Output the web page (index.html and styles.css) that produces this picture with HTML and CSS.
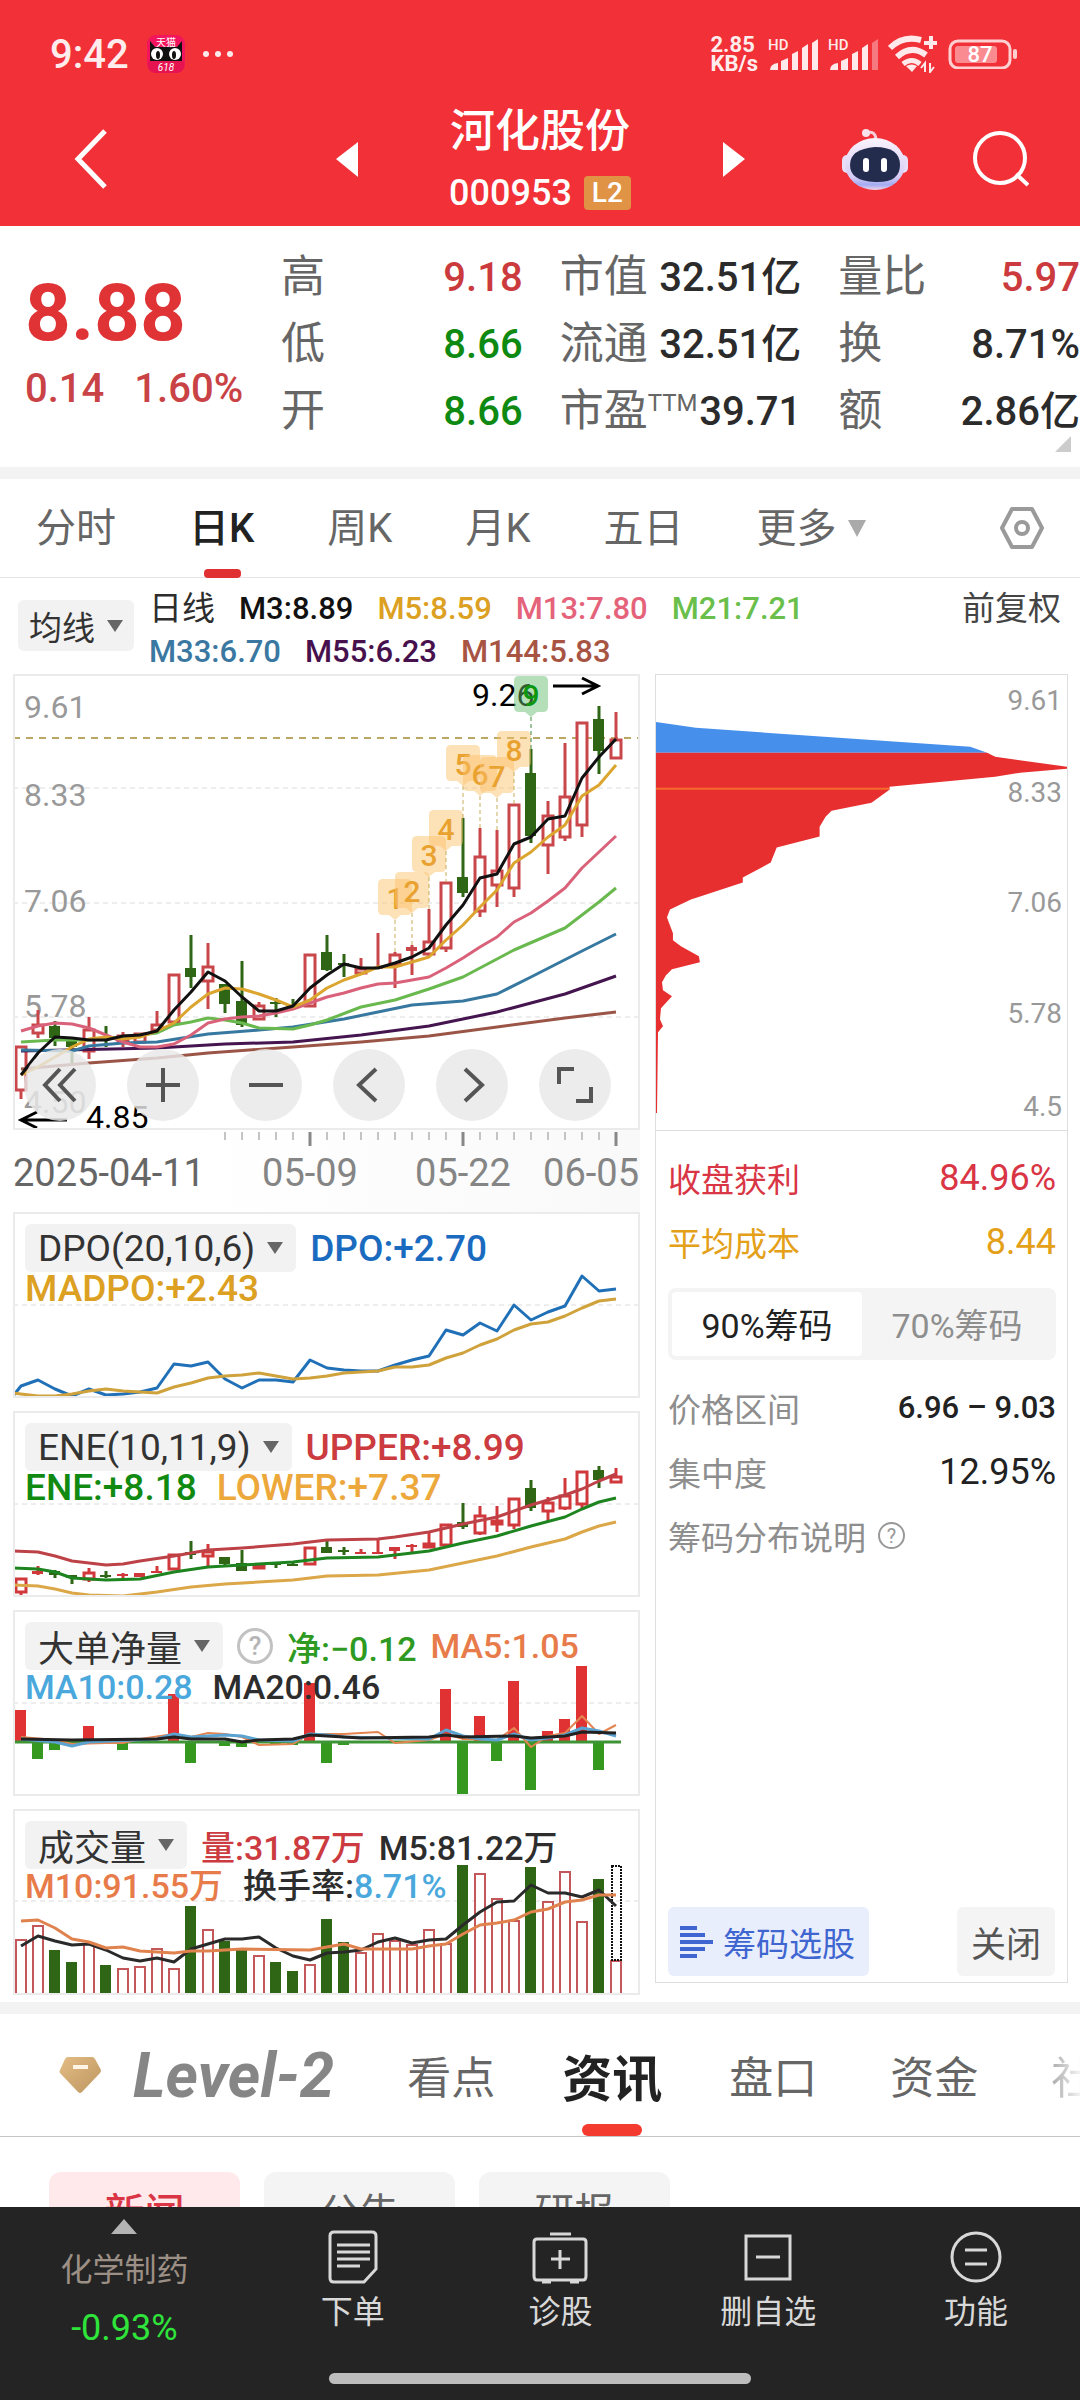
FILE: index.html
```html
<!DOCTYPE html>
<html lang="zh-CN">
<head>
<meta charset="utf-8">
<meta name="viewport" content="width=device-width, initial-scale=1">
<title>河化股份 000953</title>
<link rel="stylesheet" href="styles.css">
</head>
<body>
<div class="app">
  <header class="top">
    <div class="status">
      <span class="clock">9:42</span>
      <svg class="app-badge" width="38" height="38" viewBox="0 0 38 38" aria-hidden="true">
        <rect width="38" height="38" rx="9" fill="#f2145c"/>
        <path d="M3 6l5 6h22l5-6v20H3z" fill="#111"/>
        <text x="19" y="11" font-size="10" text-anchor="middle" fill="#fff">天猫</text>
        <ellipse cx="10" cy="19" rx="6" ry="6" fill="#fff"/><ellipse cx="28" cy="19" rx="6" ry="6" fill="#fff"/>
        <ellipse cx="11" cy="20" rx="2" ry="4" fill="#111"/><ellipse cx="27" cy="20" rx="2" ry="4" fill="#111"/>
        <path d="M1 26h36v4q0 8-9 8H10q-9 0-9-8z" fill="#e5134f"/>
        <text x="19" y="36" font-size="10" font-style="italic" text-anchor="middle" fill="#fff">618</text>
      </svg>
      <svg width="34" height="8" viewBox="0 0 34 8" aria-hidden="true" fill="#ffe9ea"><circle cx="5" cy="4" r="3"/><circle cx="17" cy="4" r="3"/><circle cx="29" cy="4" r="3"/></svg>
      <span class="status-right">
        <span class="rate">2.85<br>KB/s</span>
        <svg width="50" height="36" viewBox="0 0 50 36" aria-hidden="true" fill="#ffe9ea"><text x="0" y="14" font-size="15" font-weight="500">HD</text><path d="M2 34q0-6 8-7v7zM13 34V25l7-3v12zM24 34V18l6-3v19zM34 34V12l6-4v26zM44 34V7l6-4v31z"/></svg>
        <svg width="50" height="36" viewBox="0 0 50 36" aria-hidden="true" fill="#ffe9ea"><text x="0" y="14" font-size="15" font-weight="500">HD</text><path d="M2 34q0-6 8-7v7zM13 34V25l7-3v12zM24 34V18l6-3v19zM34 34V12l6-4v26z"/><path d="M44 34V7l6-4v31z" opacity=".4"/></svg>
        <svg width="50" height="38" viewBox="0 0 50 38" aria-hidden="true" fill="none" stroke="#ffe9ea" stroke-width="6"><path d="M2 13Q15 0 33 5M9 22q14-13 29-2" /><path d="M15 29q9-7 17 0" stroke-width="5"/><path d="M18 31q6-3 11 0l-5 6z" fill="#ffe9ea" stroke="none"/><path d="M43 1v13M36 8h13" stroke-width="4"/><path d="M37 37V28l-4 5M42 28v9l4-5" stroke-width="2"/></svg>
        <svg width="70" height="30" viewBox="0 0 70 30" aria-hidden="true"><rect x="2" y="2" width="60" height="27" rx="8" fill="none" stroke="#ffd0d2" stroke-width="3"/><rect x="7" y="7" width="42" height="17" rx="3" fill="#fa8b90"/><rect x="65" y="10" width="4" height="10" rx="2" fill="#ffd0d2"/><text x="32" y="23" font-size="22" font-weight="500" text-anchor="middle" fill="#fff">87</text></svg>
      </span>
    </div>
    <div class="titlebar">
      <button class="icon-btn back" aria-label="返回"><svg width="34" height="60" viewBox="0 0 34 60" fill="none" stroke="#fff" stroke-width="5"><path d="M31 2L4 30l27 28"/></svg></button>
      <div class="switcher">
        <button class="icon-btn" aria-label="上一只"><svg width="22" height="35" viewBox="0 0 22 35" fill="#fff"><path d="M22 0v35L0 17z"/></svg></button>
        <div class="stock">
          <h1 class="stock-name">河化股份</h1>
          <div class="stock-code">000953<span class="l2">L2</span></div>
        </div>
        <button class="icon-btn" aria-label="下一只"><svg width="22" height="35" viewBox="0 0 22 35" fill="#fff"><path d="M0 0v35l22-18z"/></svg></button>
      </div>
      <div class="tools">
        <button class="icon-btn" aria-label="助手">
          <svg width="66" height="64" viewBox="0 0 66 64"><defs><linearGradient id="bot" x1="0" y1="0" x2="0" y2="1"><stop offset="0" stop-color="#faf3fc"/><stop offset=".75" stop-color="#d6ccf5"/><stop offset=".9" stop-color="#a3abf2"/><stop offset="1" stop-color="#f2d3e6"/></linearGradient></defs><path d="M24 6q9-3 10 6" fill="none" stroke="#f6cfdb" stroke-width="3"/><circle cx="24" cy="6" r="4" fill="#f9e3ea"/><rect x="0" y="28" width="10" height="18" rx="5" fill="#e8def8"/><rect x="56" y="28" width="10" height="18" rx="5" fill="#e8def8"/><ellipse cx="33" cy="37" rx="30" ry="26" fill="url(#bot)"/><path d="M33 20q25 0 25 18t-25 17T8 38t25-18z" fill="#242c4e"/><rect x="21" y="31" width="6" height="14" rx="3" fill="#fff"/><rect x="39" y="31" width="6" height="14" rx="3" fill="#fff"/></svg>
        </button>
        <button class="icon-btn" aria-label="搜索"><svg width="56" height="56" viewBox="0 0 56 56" fill="none" stroke="#fff" stroke-width="4"><circle cx="27" cy="27" r="25"/><path d="M43 43l12 11"/></svg></button>
      </div>
    </div>
  </header>

  <main class="content">
    <section class="quote">
      <div class="price-col">
        <div class="price">8.88</div>
        <div class="change"><span>0.14</span><span>1.60%</span></div>
      </div>
      <dl class="facts">
        <div class="fact"><dt>高</dt><dd class="up">9.18</dd></div>
        <div class="fact"><dt>低</dt><dd class="down">8.66</dd></div>
        <div class="fact"><dt>开</dt><dd class="down">8.66</dd></div>
      </dl>
      <dl class="facts">
        <div class="fact"><dt>市值</dt><dd>32.51亿</dd></div>
        <div class="fact"><dt>流通</dt><dd>32.51亿</dd></div>
        <div class="fact"><dt>市盈<sup class="ttm">TTM</sup></dt><dd>39.71</dd></div>
      </dl>
      <dl class="facts">
        <div class="fact"><dt>量比</dt><dd class="up">5.97</dd></div>
        <div class="fact"><dt>换</dt><dd>8.71%</dd></div>
        <div class="fact"><dt>额</dt><dd>2.86亿</dd></div>
      </dl>
      <svg class="corner" width="16" height="16" viewBox="0 0 16 16" fill="#ccc" aria-hidden="true"><path d="M16 0v16H0z"/></svg>
    </section>

    <nav class="periods">
      <button class="period">分时</button>
      <button class="period on">日K</button>
      <button class="period">周K</button>
      <button class="period">月K</button>
      <button class="period">五日</button>
      <button class="period more">更多<svg width="18" height="17" viewBox="0 0 18 17" fill="#aaa"><path d="M0 0h18L9 17z"/></svg></button>
      <button class="icon-btn gear" aria-label="设置"><svg width="44" height="42" viewBox="0 0 44 42" fill="none" stroke="#9a9a9a" stroke-width="4"><path d="M12 2h20l10 19-10 19H12L2 21z" stroke-linejoin="round"/><circle cx="22" cy="21" r="6"/></svg></button>
    </nav>

    <div class="ma-bar">
      <button class="picker small">均线<svg width="16" height="12" viewBox="0 0 16 12" fill="#666"><path d="M0 0h16L8 12z"/></svg></button>
      <div class="ma-legend">
        <div class="ma-line"><span class="c-dark day">日线</span><span class="c-black">M3:8.89</span><span class="c-gold">M5:8.59</span><span class="c-pink">M13:7.80</span><span class="c-lime">M21:7.21</span></div>
        <div class="ma-line"><span class="c-steel">M33:6.70</span><span class="c-purple">M55:6.23</span><span class="c-brown">M144:5.83</span></div>
      </div>
      <button class="adjust">前复权</button>
    </div>

    <div class="board">
      <div class="charts">
        <div class="plot">
          <svg id="kline" class="draw" viewBox="0 0 627 456" role="img" aria-label="日K线"></svg>
          <div class="pan">
            <button class="pan-btn" aria-label="最左"><svg width="36" height="36" viewBox="0 0 36 36"><path d="M18 2L3 18l15 16M33 2L18 18l15 16"/></svg></button>
            <button class="pan-btn" aria-label="放大"><svg width="36" height="36" viewBox="0 0 36 36"><path d="M1 18h34M18 1v34"/></svg></button>
            <button class="pan-btn" aria-label="缩小"><svg width="36" height="36" viewBox="0 0 36 36"><path d="M1 18h34"/></svg></button>
            <button class="pan-btn" aria-label="左移"><svg width="36" height="36" viewBox="0 0 36 36"><path d="M25 2L8 18l17 16"/></svg></button>
            <button class="pan-btn" aria-label="右移"><svg width="36" height="36" viewBox="0 0 36 36"><path d="M11 2l17 16-17 16"/></svg></button>
            <button class="pan-btn" aria-label="全屏"><svg width="36" height="36" viewBox="0 0 36 36"><path d="M2 17V2h15M34 20v14H19"/></svg></button>
          </div>
        </div>
        <svg id="axis" class="axis" viewBox="0 0 627 82" role="img" aria-label="日期"></svg>

        <div class="plot">
          <svg id="dpo" class="draw" viewBox="0 0 627 186" role="img" aria-label="DPO"></svg>
          <div class="legend">
            <div class="legend-top"><button class="picker">DPO(20,10,6)<svg width="16" height="12" viewBox="0 0 16 12" fill="#666"><path d="M0 0h16L8 12z"/></svg></button><span class="c-blue">DPO:+2.70</span></div>
            <div class="legend-low"><span class="c-gold">MADPO:+2.43</span></div>
          </div>
        </div>
        <div class="plot">
          <svg id="ene" class="draw" viewBox="0 0 627 186" role="img" aria-label="ENE"></svg>
          <div class="legend">
            <div class="legend-top"><button class="picker">ENE(10,11,9)<svg width="16" height="12" viewBox="0 0 16 12" fill="#666"><path d="M0 0h16L8 12z"/></svg></button><span class="c-red">UPPER:+8.99</span></div>
            <div class="legend-low"><span class="c-green">ENE:+8.18</span><span class="c-amber">LOWER:+7.37</span></div>
          </div>
        </div>
        <div class="plot">
          <svg id="net" class="draw" viewBox="0 0 627 186" role="img" aria-label="大单净量"></svg>
          <div class="legend tight">
            <div class="legend-top"><button class="picker">大单净量<svg width="16" height="12" viewBox="0 0 16 12" fill="#666"><path d="M0 0h16L8 12z"/></svg></button><button class="help" aria-label="说明">?</button><span class="c-leaf">净:−0.12</span><span class="c-orange">MA5:1.05</span></div>
            <div class="legend-low"><span class="c-sky">MA10:0.28</span><span class="c-dark">MA20:0.46</span></div>
          </div>
        </div>
        <div class="plot">
          <svg id="vol" class="draw" viewBox="0 0 627 186" role="img" aria-label="成交量"></svg>
          <div class="legend tight">
            <div class="legend-top"><button class="picker">成交量<svg width="16" height="12" viewBox="0 0 16 12" fill="#666"><path d="M0 0h16L8 12z"/></svg></button><span class="c-red">量:31.87万</span><span class="c-dark">M5:81.22万</span></div>
            <div class="legend-low"><span class="c-orange">M10:91.55万</span><span class="c-dark">换手率:<span class="c-sky">8.71%</span></span></div>
          </div>
        </div>
      </div>

      <aside class="chips">
        <svg class="chips-draw" viewBox="0 0 412 456" role="img" aria-label="筹码分布">
          <path d="M0 47L40 53 315 72 332 78H0z" fill="#4690ec"/>
          <path d="M0 78H332L340 82 412 92V94L365 98 340 102 234 112V115L216 128 176 136 170 142 164 152V162L121 173 115 188 87 203V208L35 225 14 235 11 243 17 259V266L25 272 43 282 44 288 16 295 10 301 6 308 7 316 16 322 5 334 4 345 7 352 2 358 1 439H0z" fill="#e82f30"/>
          <path d="M0 114H234" stroke="#f56a2d" stroke-width="2"/>
          <g class="tick" text-anchor="end"><text x="407" y="35">9.61</text><text x="407" y="127">8.33</text><text x="407" y="238">7.06</text><text x="407" y="349">5.78</text><text x="407" y="442">4.5</text></g>
        </svg>
        <div class="chips-body">
          <div class="stat c-crimson"><span>收盘获利</span><b>84.96%</b></div>
          <div class="stat c-honey"><span>平均成本</span><b>8.44</b></div>
          <div class="toggle"><button class="seg on">90%筹码</button><button class="seg">70%筹码</button></div>
          <div class="stat muted"><span>价格区间</span><b class="range">6.96 – 9.03</b></div>
          <div class="stat muted"><span>集中度</span><b>12.95%</b></div>
          <div class="stat muted note"><span>筹码分布说明</span><button class="help mini" aria-label="说明">?</button></div>
        </div>
        <div class="chips-foot">
          <button class="pick-stock"><svg width="33" height="32" viewBox="0 0 33 32" fill="#3f66d0"><path d="M0 0h17v4H0zM0 7h25v4H0zM0 14h33v4H0zM0 21h25v4H0zM0 28h17v4H0z"/></svg>筹码选股</button>
          <button class="close">关闭</button>
        </div>
      </aside>
    </div>

    <nav class="sections">
      <button class="section level">
        <svg width="42" height="36" viewBox="0 0 42 36"><defs><linearGradient id="gem" x1="0" y1="0" x2="1" y2="1"><stop offset="0" stop-color="#e3bd84"/><stop offset="1" stop-color="#bd9560"/></linearGradient></defs><path d="M9 0h24q2 0 3 2l6 11q0 2-1 3L23 35q-2 2-4 0L1 16q-1-1 0-3L6 2q1-2 3-2z" fill="url(#gem)"/><path d="M14 10h15" stroke="#fff5e4" stroke-width="4"/></svg>
        <span>Level-2</span>
      </button>
      <button class="section">看点</button>
      <button class="section on">资讯</button>
      <button class="section">盘口</button>
      <button class="section">资金</button>
      <button class="section fade">社区</button>
    </nav>
    <div class="feeds">
      <button class="feed on">新闻</button><button class="feed">公告</button><button class="feed">研报</button>
    </div>
  </main>

  <footer class="dock">
    <div class="dock-row">
      <button class="dock-index"><svg width="26" height="15" viewBox="0 0 26 15" fill="#b4b4b4"><path d="M13 0l13 15H0z"/></svg><span class="sector">化学制药</span><span class="sector-change">-0.93%</span></button>
      <button class="dock-item"><svg width="56" height="54" viewBox="0 0 56 54"><path d="M9 2h38q4 0 4 4v33L39 52H9q-4 0-4-4V6q0-4 4-4zM12 15h33M12 22h33M12 29h33M12 36h23"/></svg>下单</button>
      <button class="dock-item"><svg width="56" height="54" viewBox="0 0 56 54"><path d="M18 4h21M5 9h46q3 0 3 3v34q0 4-3 4H5q-3 0-3-4V12q0-3 3-3zM28 20v19M19 29h19M10 52h9M38 52h9"/></svg>诊股</button>
      <button class="dock-item"><svg width="56" height="54" viewBox="0 0 56 54"><path d="M6 6h44v43H6zM16 27h24"/></svg>删自选</button>
      <button class="dock-item"><svg width="56" height="54" viewBox="0 0 56 54"><circle cx="28" cy="27" r="24"/><path d="M17 20h22M17 34h22"/></svg>功能</button>
    </div>
    <div class="home-bar"></div>
  </footer>
</div>
<script src="charts.js"></script>
</body>
</html>
```
FILE: styles.css
```css
* { box-sizing: border-box; }
body { margin: 0; background: #fff; color: #333; font-family: Roboto, "Noto Sans CJK SC", sans-serif; }
button { font: inherit; color: inherit; background: none; border: 0; padding: 0; margin: 0; white-space: nowrap; cursor: pointer; }
dl, dd, h1 { margin: 0; }
svg { display: block; flex: none; }
svg text { font-family: Roboto, "Noto Sans CJK SC", sans-serif; }

.app { display: flex; flex-direction: column; height: 100vh; }
.icon-btn { display: block; }

/* header */
.top { background: #f13037; color: #fff; flex: none; padding-bottom: 12px; }
.status { display: flex; align-items: center; height: 104px; padding: 4px 62px 0 50px; color: #ffeced; }
.clock { font-size: 40px; font-weight: 500; margin-right: 18px; }
.app-badge { margin-right: 16px; }
.status-right { display: flex; align-items: center; gap: 10px; margin-left: auto; }
.rate { font-size: 22px; font-weight: 700; line-height: 19px; }
.titlebar { display: grid; grid-template-columns: 1fr 409px 1fr; align-items: center; height: 110px; }
.back { justify-self: start; margin-left: 74px; }
.switcher { display: flex; align-items: center; justify-content: space-between; }
.stock { height: 110px; }
.stock-name { font-size: 45px; line-height: 56px; font-weight: 500; text-align: center; }
.stock-code { display: flex; align-items: center; gap: 12px; margin-top: 16px; font-size: 36px; line-height: 34px; font-weight: 500; }
.l2 { background: #e09345; border-radius: 4px; padding: 0 8px; font-size: 28px; }
.tools { display: flex; align-items: center; justify-content: flex-end; gap: 65px; padding-right: 51px; }

.content { flex: 1; min-height: 0; overflow: hidden auto; scrollbar-width: none; }

/* quote */
.quote { position: relative; display: grid; grid-template-columns: 219px repeat(3, 1fr); column-gap: 37px; padding: 18px 0 22px 25px; border-bottom: 12px solid #f3f3f3; }
.price-col { padding-top: 23px; color: #df3335; }
.price { font-size: 80px; font-weight: 700; line-height: 92px; }
.change { display: flex; gap: 30px; font-size: 40px; line-height: 60px; color: #c94245; font-weight: 500; }
.fact { display: flex; justify-content: space-between; line-height: 67px; white-space: nowrap; }
.fact dt { font-size: 44px; color: #666; display: flex; }
.fact dd { font-size: 40px; font-weight: 500; color: #2b2b2b; }
.ttm { font-size: 24px; line-height: 50px; }
.fact .up { color: #cb3a3d; }
.fact .down { color: #0e8a12; }
.corner { position: absolute; right: 9px; bottom: 15px; }

/* periods */
.periods { display: flex; align-items: center; gap: 73px; height: 99px; padding: 0 36px; border-bottom: 1px solid #e4e4e4; font-size: 40px; color: #666; }
.period { position: relative; line-height: 99px; }
.period.on { color: #222; font-weight: 500; }
.period.on::after { content: ""; position: absolute; left: calc(50% - 18px); bottom: 0; width: 37px; height: 9px; border-radius: 4px; background: #e03032; }
.more { display: flex; align-items: center; gap: 11px; }
.gear { margin-left: auto; }

/* moving average bar */
.ma-bar { display: flex; align-items: flex-start; padding: 9px 19px 0 18px; height: 96px; }
.picker { display: flex; align-items: center; gap: 12px; height: 48px; padding: 0 13px; border-radius: 6px; background: #f2f2f2; color: #333; font-size: 37px; }
.picker.small { margin-top: 13px; height: 51px; padding: 0 11px; font-size: 33px; }
.ma-legend { margin-left: 15px; font-size: 31px; line-height: 43px; font-weight: 500; }
.ma-line { display: flex; gap: 24px; }
.day { font-size: 33px; font-weight: 400; }
.adjust { margin-left: auto; font-size: 33px; line-height: 43px; color: #444; }

.c-dark { color: #2d2d2d; }
.c-black { color: #111; }
.c-gold { color: #dca022; }
.c-pink { color: #e5637a; }
.c-lime { color: #6abf4b; }
.c-steel { color: #3a78a2; }
.c-purple { color: #47114d; }
.c-brown { color: #a85443; }
.c-blue { color: #1a6bc0; }
.c-red { color: #cb3b40; }
.c-green { color: #118a11; }
.c-amber { color: #eda83c; }
.c-leaf { color: #2f9a22; }
.c-orange { color: #e87b4a; }
.c-sky { color: #4aa8dc; }
.c-crimson { color: #d93545; }
.c-honey { color: #e3a018; }

/* charts */
.board { display: grid; grid-template-columns: 627fr 413fr; column-gap: 15px; padding: 0 12px 7px 13px; border-bottom: 12px solid #f3f3f3; }
.plot { position: relative; outline: 2px solid #ebebeb; outline-offset: -2px; }
.plot + .plot { margin-top: 13px; }
.draw, .axis, .chips-draw { width: 100%; height: auto; }
.axis { background: linear-gradient(90deg, #fff 30%, #f9f9f9); }
.pan { position: absolute; left: 11px; right: 29px; bottom: 9px; display: flex; justify-content: space-between; }
.pan-btn { display: flex; align-items: center; justify-content: center; width: 72px; height: 72px; border-radius: 50%; background: rgba(232, 232, 232, .82); }
.pan-btn svg { fill: none; stroke: #555; stroke-width: 4; }
.legend { position: absolute; inset: 11px 12px auto 12px; font-size: 37px; font-weight: 500; white-space: nowrap; }
.legend .picker { font-weight: 400; }
.tight { font-size: 34px; }
.tight .picker { font-size: 36px; }
.legend-top { display: flex; align-items: center; gap: 14px; height: 50px; }
.legend-low { display: flex; gap: 20px; line-height: 32px; }
.help { width: 36px; height: 36px; border: 3px solid #c2c2c2; border-radius: 50%; color: #b5b5b5; font-size: 26px; line-height: 30px; }
.tick { font-size: 28px; fill: #999; }
.scale { font-size: 32px; fill: #999; }

/* chip distribution */
.chips { display: flex; flex-direction: column; border: 1px solid #dedede; margin-bottom: 12px; }
.chips-draw { border-bottom: 1px solid #dedede; }
.chips-body { padding: 15px 11px 0 12px; }
.stat { display: flex; align-items: center; justify-content: space-between; height: 64px; font-size: 33px; white-space: nowrap; }
.stat b { font-size: 36px; font-weight: 400; }
.stat .range { font-size: 31px; font-weight: 500; }
.muted { color: #8e8e8e; }
.muted b { color: #222; }
.note { justify-content: flex-start; gap: 12px; }
.mini { width: 27px; height: 27px; border-width: 2px; color: #999; border-color: #999; font-size: 20px; line-height: 22px; }
.toggle { display: flex; height: 72px; margin: 14px 0 16px; padding: 4px; background: #f4f4f4; border-radius: 8px; }
.seg { flex: 1; font-size: 34px; color: #8e8e8e; border-radius: 4px; }
.seg.on { background: #fff; color: #222; }
.chips-foot { display: flex; justify-content: space-between; margin-top: auto; padding: 0 12px 6px; }
.pick-stock { display: flex; align-items: center; gap: 10px; height: 69px; padding: 0 14px 0 12px; border-radius: 6px; background: #e9eefd; color: #3f66d0; font-size: 33px; }
.close { height: 69px; padding: 0 14px; border-radius: 6px; background: #f4f4f4; color: #555; font-size: 35px; }

/* sections */
.sections { display: flex; align-items: center; gap: 73px; height: 123px; padding-left: 59px; overflow: hidden; border-bottom: 1px solid #c6c6c6; font-size: 44px; color: #666; }
.section { position: relative; height: 122px; flex: none; }
.level { display: flex; align-items: center; gap: 32px; font-size: 62px; font-weight: 700; font-style: italic; color: #868686; }
.section.on { margin: 0 -6px; font-size: 50px; font-weight: 700; color: #222; }
.section.on::after { content: ""; position: absolute; left: calc(50% - 30px); bottom: 0; width: 60px; height: 12px; border-radius: 6px; background: #f43b30; }
.fade { background: linear-gradient(90deg, #aaa, #fff 34px); -webkit-background-clip: text; background-clip: text; color: transparent; }
.feeds { display: flex; gap: 24px; padding: 35px 49px; }
.feed { width: 191px; height: 76px; border-radius: 12px; background: #f4f4f4; font-size: 40px; color: #666; }
.feed.on { background: #ffe9eb; color: #d93545; font-weight: 500; }

/* bottom dock */
.dock { flex: none; background: #242424; color: #d8d8d8; padding: 12px 0 16px; }
.dock-row { display: grid; grid-template-columns: 249fr repeat(4, 208fr); height: 154px; }
.dock-index { display: flex; flex-direction: column; align-items: center; }
.sector { margin-top: 16px; font-size: 32px; line-height: 40px; color: #9c8f85; }
.sector-change { margin-top: 18px; font-size: 36px; line-height: 40px; color: #2fe43a; }
.dock-item { display: flex; flex-direction: column; align-items: center; gap: 8px; padding-top: 11px; font-size: 32px; line-height: 40px; }
.dock-item svg { fill: none; stroke: #d8d8d8; stroke-width: 3; }
.home-bar { width: 39%; height: 11px; margin: 0 auto; border-radius: 6px; background: #bdbdbd; }
```
FILE: charts.js
```js
const STEP = 17, FIRST = 8, BODY = 11;
const RED = '#c9474b', GREEN = '#2f6615';
const at = i => Math.round(FIRST + STEP * i);
const put = (id, html) => { document.getElementById(id).innerHTML = html; };

// direction, wick top, body top, body bottom, wick bottom
const candles = [
  ['r', 372, 372, 417, 425], ['r', 336, 350, 360, 364], ['g', 347, 352, 364, 372], ['g', 364, 364, 373, 390],
  ['r', 343, 355, 378, 385], ['g', 352, 363, 365, 373], ['r', 358, 361, 368, 373], ['r', 359, 359, 369, 369],
  ['r', 337, 350, 357, 357], ['r', 300, 300, 349, 349], ['g', 261, 294, 303, 314], ['r', 269, 292, 308, 335],
  ['g', 310, 310, 330, 339], ['g', 287, 327, 351, 353], ['r', 328, 331, 346, 346], ['g', 324, 328, 330, 343],
  ['g', 325, 331, 333, 333], ['r', 280, 280, 333, 333], ['g', 261, 278, 296, 297], ['g', 280, 289, 291, 303],
  ['r', 284, 294, 300, 300], ['r', 259, 293, 295, 295], ['r', 278, 280, 292, 314], ['r', 271, 273, 277, 301],
  ['r', 235, 267, 281, 283], ['r', 208, 208, 275, 278], ['g', 144, 203, 219, 223], ['r', 154, 182, 238, 243],
  ['r', 156, 196, 212, 233], ['r', 130, 130, 215, 223], ['g', 75, 99, 162, 169], ['r', 127, 141, 172, 200],
  ['r', 69, 122, 164, 167], ['r', 48, 48, 152, 163], ['g', 32, 45, 77, 100], ['r', 38, 65, 85, 85]
];

function drawCandles(map, red) {
  return candles.map(([dir, wt, bt, bb, wb], i) => {
    const x = at(i), c = dir === 'r' ? red : GREEN;
    const [a, b, d, e] = [wt, bt, bb, wb].map(map);
    const h = Math.max(d - b, 2);
    const wicks = `<path d="M${x} ${a}V${b}M${x} ${d}V${e}" stroke="${c}" stroke-width="3"/>`;
    if (dir === 'g' || h < 5) return wicks + `<rect x="${x - 6}" y="${b}" width="${BODY}" height="${h}" fill="${c}"/>`;
    return wicks + `<rect x="${x - 5}" y="${b + 1}" width="10" height="${h - 2}" fill="#fff" stroke="${c}" stroke-width="3"/>`;
  }).join('');
}

// a line is a list of "index:y" pairs
function line(points, color, width = 3) {
  const p = points.trim().split(/\s+/).map(s => { const [i, y] = s.split(':'); return `${at(+i)},${y}`; }).join(' ');
  return `<polyline points="${p}" fill="none" stroke="${color}" stroke-width="${width}" stroke-linejoin="round"/>`;
}
const seq = a => a.map((y, i) => `${i}:${y}`).join(' ');
const grid = y => `<path d="M0 ${y}H627" stroke="#dcdcdc" stroke-width="1" stroke-dasharray="5 4"/>`;

const tags = [[22, 1, 205], [23, 2, 198], [24, 3, 162], [25, 4, 136], [26, 5, 71], [27, 6, 81], [28, 7, 83], [29, 8, 57], [30, 9, 2]];
const tagSvg = tags.map(([i, n, y]) => {
  const x = at(i), g = n === 9;
  return `<path d="M${x} ${y + 41}V${candles[i][1]}" stroke="${g ? '#3c8a3c' : '#c8ad5a'}" stroke-dasharray="4 3"/>` +
    `<path d="M${x - 12} ${y}h24q5 0 5 5v26q0 5-5 5h-6l-6 5-6-5h-6q-5 0-5-5v-26q0-5 5-5z" fill="${g ? '#62bd6c' : '#fbc069'}" opacity=".48"/>` +
    `<text x="${x}" y="${y + 30}" font-size="30" font-weight="500" text-anchor="middle" fill="${g ? '#0d970f' : '#e9a230'}">${n}</text>`;
}).join('');

put('kline',
  '<path d="M0 64H627" stroke="#b9a763" stroke-width="2" stroke-dasharray="7 6"/>' + grid(114) + grid(229) + grid(343) +
  '<g class="scale"><text x="11" y="44">9.61</text><text x="11" y="132">8.33</text><text x="11" y="238">7.06</text><text x="11" y="343">5.78</text><text x="11" y="439">4.50</text></g>' +
  drawCandles(y => y, RED) +
  line('0:395 4:389 8:384 11:379 16:373 20:368 24:362 28:353 32:344 35:338', '#9a5547') +
  line('0:377 8:374 12:370 16:368 20:361 24:352 26:345 28:338 30:329 32:320 35:302', '#45154f') +
  line('0:376 3:377 4:372 6:369 8:368 11:360 14:356 16:353 19:345 23:331 26:327 28:320 30:303 33:277 35:260', '#36789f') +
  line('0:368 2:366 4:366 6:363 8:359 9:351 10:348 11:344 12:346 13:349 14:354 16:355 17:351 18:346 20:333 22:326 24:315 26:303 29:276 32:254 34:228 35:214', '#69b94f') +
  line(seq([357, 352, 349, 350, 354, 361, 368, 373, 373, 370, 361, 349, 345, 343, 342, 339, 335, 329, 323, 319, 314, 310, 309, 306, 303, 294, 284, 273, 263, 248, 239, 227, 214, 194, 178, 162]), '#d9627a') +
  line(seq([401, 393, 383, 373, 365, 363, 365, 363, 357, 349, 333, 320, 314, 315, 320, 326, 333, 326, 314, 306, 300, 293, 293, 288, 283, 266, 251, 233, 216, 189, 178, 163, 151, 122, 111, 91]), '#dba52f') +
  line(seq([401, 379, 363, 364, 366, 366, 362, 361, 357, 336, 318, 298, 307, 323, 337, 337, 332, 314, 301, 290, 294, 294, 289, 283, 274, 251, 231, 204, 200, 170, 163, 145, 142, 104, 83, 65]), '#111') +
  '<text x="459" y="32" font-size="32" fill="#000">9.26</text>' + tagSvg +
  '<path d="M540 12H585M569 4L585 12L569 20" fill="none" stroke="#000" stroke-width="3"/>' +
  '<text x="73" y="454" font-size="32" fill="#000">4.85</text><path d="M54 446H8M24 438L8 446L24 454" fill="none" stroke="#000" stroke-width="3"/>');

let ticks = '';
for (let i = 12; i <= 35; i++) {
  const major = i === 17 || i === 26 || i === 35;
  ticks += `<path d="M${at(i)} 2v${major ? 14 : 8}" stroke="${major ? '#888' : '#c4c4c4'}" stroke-width="${major ? 3 : 2}"/>`;
}
put('axis', ticks + '<g font-size="38" fill="#858585"><text x="0" y="56" fill="#666">2025-04-11</text><text x="297" y="56" text-anchor="middle">05-09</text><text x="450" y="56" text-anchor="middle">05-22</text><text x="626" y="56" text-anchor="end">06-05</text></g>');

put('dpo', grid(93) +
  line(seq([174, 168, 177, 184, 177, 183, 182, 180, 176, 152, 154, 150, 167, 176, 168, 168, 170, 148, 156, 158, 159, 159, 153, 148, 144, 118, 123, 111, 119, 93, 108, 100, 94, 64, 79, 77]).replace(/^/, '-0.47:184 '), '#2070b8') +
  line('-0.47:181 0:182 1:184 2:184 3:182 4:179 5:177 6:179 8:181 9:175 10:171 11:166 12:164 13:163 14:161 15:164 16:167 17:166 18:164 19:161 21:159 22:155 23:155 24:153 25:146 26:141 27:133 28:127 29:118 30:112 31:110 32:104 33:96 34:89 35:87', '#cfa23c'));

put('ene', grid(93) + drawCandles(y => Math.round(y * 0.33 + 44), '#d0383c') +
  line('-0.47:140 1:141 2:145 3:150 4:152 5:154 6:153 7:150 9:145 10:142 11:139 13:137 16:133 18:129 21:128 22:126 24:121 25:117 26:113 28:106 30:94 32:84 33:78 34:70 35:63', '#bd4247') +
  line('-0.47:157 1:158 2:161 3:167 5:169 7:168 9:161 11:156 13:154 16:151 18:147 21:146 24:140 26:132 28:125 30:115 32:106 33:98 34:91 35:87', '#1d8420') +
  line('-0.47:174 1:175 2:178 3:182 4:184 6:185 8:181 10:176 12:173 16:169 18:165 21:164 24:159 26:152 28:145 30:136 32:128 33:121 34:115 35:111', '#dba748'));

const net = [[0, 100], [1, 149], [2, 140], [4, 116], [6, 140], [9, 84], [10, 153], [12, 136], [13, 137], [15, 135], [16, 135], [17, 73], [18, 153], [19, 135], [25, 79], [26, 185], [27, 106], [28, 151], [29, 71], [30, 180], [31, 121], [32, 109], [33, 56], [34, 160]];
put('net', grid(93) + net.map(([i, y]) => y < 132
    ? `<rect x="${at(i) - 6}" y="${y}" width="${BODY}" height="${132 - y}" fill="#e03233"/>`
    : `<rect x="${at(i) - 6}" y="132" width="${BODY}" height="${y - 132}" fill="#35991f"/>`).join('') +
  '<path d="M0 132H608" stroke="#3f9436" stroke-width="3"/>' +
  line('0:127 2:130 3:134 5:133 6:133 7:129 9:124 10:127 11:123 12:124 13:127 14:135 16:134 17:124 19:124 21:122 22:133 24:130 25:124 26:129 28:130 29:118 30:137 31:126 32:123 33:106 34:124 35:115', '#e48450', 2) +
  line('0:129 2:132 3:136 4:132 8:129 9:124 10:127 12:125 13:126 14:130 16:131 17:124 18:125 19:127 24:129 25:120 26:126 27:129 28:130 29:124 30:130 31:128 32:125 33:118 34:121 35:126', '#5ba3d0') +
  line('0:129 3:130 8:129 9:127 10:129 12:129 13:132 14:130 16:129 17:125 20:128 24:127 25:125 26:127 29:126 30:128 32:126 33:122 35:123', '#222'));

const vol = 'r130 r116 g141 g153 r134 g156 r159 r157 r139 r159 g97 r120 g132 g141 r146 g153 g162 r155 g110 g133 r143 r124 r131 r135 r120 r134 g56 r64 r89 r111 g58 r92 r62 r112 g70 r151'.split(' ');
put('vol', grid(92) + vol.map((v, i) => {
    const y = +v.slice(1);
    return v[0] === 'g'
      ? `<rect x="${at(i) - 6}" y="${y}" width="${BODY}" height="${186 - y}" fill="${GREEN}"/>`
      : `<rect x="${at(i) - 5}" y="${y + 1}" width="10" height="${184 - y}" fill="#fff" stroke="#c4575a" stroke-width="2"/>`;
  }).join('') +
  `<rect x="${at(35) - 4}" y="57" width="9" height="94" fill="none" stroke="#111" stroke-width="2" stroke-dasharray="2 1"/>` +
  line(seq([137, 127, 132, 136, 135, 141, 149, 152, 149, 153, 140, 135, 130, 130, 128, 139, 147, 151, 144, 143, 141, 133, 129, 134, 131, 130, 116, 103, 93, 92, 76, 84, 84, 88, 81, 97]), '#2a2a2a') +
  line('0:112 1:111 2:119 3:130 4:133 5:139 6:138 7:142 9:144 10:142 11:142 13:140 17:141 19:135 20:140 23:140 24:137 25:135 26:125 27:116 28:114 29:111 30:103 31:100 32:93 33:91 34:86 35:86', '#e0824d'));
```
